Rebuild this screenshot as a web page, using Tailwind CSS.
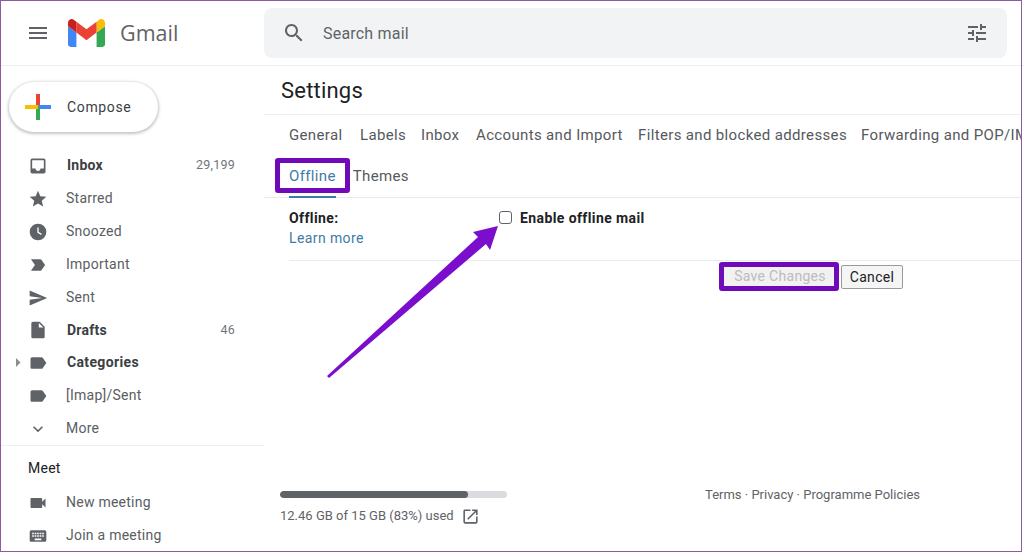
<!DOCTYPE html>
<html lang="en">
<head>
  <meta charset="UTF-8" />
  <meta name="viewport" content="width=device-width, initial-scale=1.0" />
  <title>Gmail - Settings</title>
  <script src="https://cdn.jsdelivr.net/npm/@tailwindcss/browser@4"></script>
</head>
<body class="bg-white font-['Roboto',sans-serif] text-[#3c4043] overflow-hidden">
  <div class="relative w-[1024px] h-[553px] overflow-hidden">

    <!-- header -->
    <header class="h-[66px] flex items-center border-b border-[#eceef0]">
      <div class="w-[264px] flex items-center shrink-0">
        <svg class="ml-[26px] w-[24px] h-[24px] fill-[#5f6368]" viewBox="0 0 24 24"><path d="M3 18h18v-2H3v2zm0-5h18v-2H3v2zm0-7v2h18V6H3z"/></svg>
        <svg class="ml-[18px] w-[37px] h-[28px]" viewBox="52 42 88 66">
          <path fill="#4285f4" d="M58 108h14V74L52 59v43c0 3.32 2.69 6 6 6"/>
          <path fill="#34a853" d="M120 108h14c3.32 0 6-2.69 6-6V59l-20 15"/>
          <path fill="#fbbc04" d="M120 48v26l20-15v-8c0-7.42-8.47-11.65-14.4-7.2"/>
          <path fill="#ea4335" d="M72 74V48l24 18 24-18v26L96 92"/>
          <path fill="#c5221f" d="M52 51v8l20 15V48l-5.6-4.2c-5.94-4.45-14.4-.22-14.4 7.2"/>
        </svg>
        <span class="ml-[15px] text-[21.5px] leading-none text-[#5f6368] font-['Open_Sans',sans-serif]">Gmail</span>
      </div>
      <div class="w-[743px] h-[50px] bg-[#f1f3f4] rounded-lg flex items-center pl-[18px] pr-[18px]">
        <svg class="w-[24px] h-[24px] fill-[#5f6368]" viewBox="0 0 24 24"><path d="M15.5 14h-.79l-.28-.27C15.41 12.59 16 11.11 16 9.5 16 5.91 13.09 3 9.5 3S3 5.91 3 9.5 5.91 16 9.5 16c1.61 0 3.09-.59 4.23-1.57l.27.28v.79l5 4.99L20.49 19l-4.99-5zm-6 0C7.01 14 5 11.99 5 9.5S7.01 5 9.5 5 14 7.01 14 9.5 11.99 14 9.5 14z"/></svg>
        <span class="ml-[17px] mt-[2px] text-[16px] tracking-[0.2px] text-[#5f6368]">Search mail</span>
        <svg class="ml-auto w-[24px] h-[24px] fill-[#5f6368]" viewBox="0 0 24 24"><path d="M3 17v2h6v-2H3zM3 5v2h10V5H3zm10 16v-2h8v-2h-8v-2h-2v6h2zM7 9v2H3v2h4v2h2V9H7zm14 4v-2H11v2h10zm-6-4h2V7h4V5h-4V3h-2v6z"/></svg>
      </div>
    </header>

    <div class="flex w-[1021px] h-[487px]">
      <!-- sidebar -->
      <aside class="w-[264px] shrink-0 text-[14px] tracking-[0.25px]">
        <div class="pt-[16px] pl-[9px]">
          <div class="w-[149px] h-[50px] rounded-full bg-white shadow-[0_1px_3px_1px_rgba(60,64,67,0.3)] flex items-center pl-[16px]">
            <svg class="w-[26px] h-[26px]" viewBox="0 0 26 26">
              <rect x="11" y="0" width="4" height="13" fill="#ea4335"/>
              <rect x="13" y="11" width="13" height="4" fill="#4285f4"/>
              <rect x="11" y="13" width="4" height="13" fill="#34a853"/>
              <rect x="0" y="11" width="13" height="4" fill="#fbbc04"/>
            </svg>
            <span class="ml-[16px] tracking-[0.65px] text-[#3c4043]">Compose</span>
          </div>
        </div>

        <ul class="mt-[17px] border-b border-[#eff0f1] text-[#5a5e62]">
          <li class="h-[33px] flex items-center pl-[28px] pr-[29px] font-bold text-[#3c4043]">
            <svg class="w-[20px] h-[20px] fill-[#5f6368]" viewBox="0 0 24 24"><path d="M19 3H5a2 2 0 0 0-2 2v14c0 1.1.89 2 2 2h14c1.1 0 2-.9 2-2V5c0-1.1-.9-2-2-2zm0 12h-4c0 1.66-1.35 3-3 3s-3-1.34-3-3H4.99V5H19v10z"/></svg>
            <span class="ml-[19px]">Inbox</span>
            <span class="ml-auto text-[12.5px] font-normal text-[#70757a]">29,199</span>
          </li>
          <li class="h-[33px] flex items-center pl-[28px] pr-[29px]">
            <svg class="w-[20px] h-[20px] fill-[#5f6368]" viewBox="0 0 24 24"><path d="M12 17.27L18.18 21l-1.64-7.03L22 9.24l-7.19-.61L12 2 9.19 8.63 2 9.24l5.46 4.73L5.82 21z"/></svg>
            <span class="ml-[18px]">Starred</span>
          </li>
          <li class="h-[33px] flex items-center pl-[28px] pr-[29px]">
            <svg class="w-[20px] h-[20px]" viewBox="0 0 24 24"><circle cx="12" cy="12" r="10" fill="#5f6368"/><path d="M12 6.5V12.3l4.2 2.5" fill="none" stroke="#fff" stroke-width="1.6"/></svg>
            <span class="ml-[18px]">Snoozed</span>
          </li>
          <li class="h-[33px] flex items-center pl-[28px] pr-[29px]">
            <svg class="w-[20px] h-[20px] fill-[#5f6368]" viewBox="0 0 24 24"><path d="M3.5 18.99l11 .01c.67 0 1.27-.33 1.63-.84L20.5 12l-4.37-6.16c-.36-.51-.96-.84-1.63-.84l-11 .01L8.34 12 3.5 18.99z"/></svg>
            <span class="ml-[18px]">Important</span>
          </li>
          <li class="h-[33px] flex items-center pl-[28px] pr-[29px]">
            <svg class="w-[20px] h-[20px] fill-[#5f6368]" viewBox="0 0 24 24"><path d="M2.01 21L23 12 2.01 3 2 10l15 2-15 2z"/></svg>
            <span class="ml-[18px]">Sent</span>
          </li>
          <li class="h-[32px] flex items-center pl-[28px] pr-[29px] font-bold text-[#3c4043]">
            <svg class="w-[20px] h-[20px] fill-[#5f6368]" viewBox="0 0 24 24"><path d="M14 2H6c-1.1 0-1.99.9-1.99 2L4 20c0 1.1.89 2 1.99 2H18c1.1 0 2-.9 2-2V8l-6-6zm-1 7V3.5L18.5 9H13z"/></svg>
            <span class="ml-[19px]">Drafts</span>
            <span class="ml-auto text-[12.5px] font-normal text-[#70757a]">46</span>
          </li>
          <li class="relative h-[33px] flex items-center pl-[28px] pr-[29px] font-bold text-[#3c4043]">
            <svg class="absolute left-[15px] top-[12px] w-[6px] h-[9px] fill-[#8a8d91]" viewBox="0 0 6 9"><path d="M1 0l4.5 4.5L1 9z"/></svg>
            <svg class="w-[20px] h-[20px] fill-[#5f6368]" viewBox="0 0 24 24"><path d="M17.63 5.84C17.27 5.33 16.67 5 16 5L5 5.01C3.9 5.01 3 5.9 3 7v10c0 1.1.9 1.99 2 1.99L16 19c.67 0 1.27-.33 1.63-.84L22 12l-4.37-6.16z"/></svg>
            <span class="ml-[19px] tracking-[0.35px]">Categories</span>
          </li>
          <li class="h-[33px] flex items-center pl-[28px] pr-[29px]">
            <svg class="w-[20px] h-[20px] fill-[#5f6368]" viewBox="0 0 24 24"><path d="M17.63 5.84C17.27 5.33 16.67 5 16 5L5 5.01C3.9 5.01 3 5.9 3 7v10c0 1.1.9 1.99 2 1.99L16 19c.67 0 1.27-.33 1.63-.84L22 12l-4.37-6.16z"/></svg>
            <span class="ml-[18px]">[Imap]/Sent</span>
          </li>
          <li class="h-[33px] flex items-center pl-[28px] pr-[29px]">
            <svg class="w-[20px] h-[20px] fill-[#5f6368]" viewBox="0 0 24 24"><path d="M16.59 8.59L12 13.17 7.41 8.59 6 10l6 6 6-6z"/></svg>
            <span class="ml-[18px]">More</span>
          </li>
        </ul>

        <div class="h-[45px] flex items-center pl-[28px] text-[#202124]">Meet</div>
        <ul class="-mt-[5px] text-[#5a5e62]">
          <li class="h-[33px] flex items-center pl-[28px]">
            <svg class="w-[20px] h-[20px] fill-[#5f6368]" viewBox="0 0 24 24"><path d="M17 10.5V7c0-.55-.45-1-1-1H4c-.55 0-1 .45-1 1v10c0 .55.45 1 1 1h12c.55 0 1-.45 1-1v-3.5l4 4v-11l-4 4z"/></svg>
            <span class="ml-[18px]">New meeting</span>
          </li>
          <li class="h-[33px] flex items-center pl-[28px]">
            <svg class="w-[20px] h-[20px] fill-[#5f6368]" viewBox="0 0 24 24"><path d="M20 5H4c-1.1 0-1.99.9-1.99 2L2 17c0 1.1.9 2 2 2h16c1.1 0 2-.9 2-2V7c0-1.1-.9-2-2-2zm-9 3h2v2h-2V8zm0 3h2v2h-2v-2zM8 8h2v2H8V8zm0 3h2v2H8v-2zm-1 2H5v-2h2v2zm0-3H5V8h2v2zm9 7H8v-2h8v2zm0-4h-2v-2h2v2zm0-3h-2V8h2v2zm3 3h-2v-2h2v2zm0-3h-2V8h2v2z"/></svg>
            <span class="ml-[18px]">Join a meeting</span>
          </li>
        </ul>
      </aside>

      <!-- settings -->
      <main class="flex-1 min-w-0 overflow-hidden">
        <div class="h-[49px] flex items-center pl-[17px] border-b border-[#eceef0] text-[22px] tracking-[0.2px] text-[#202124]">Settings</div>

        <div class="pl-[25px] border-b border-[#e8eaed] h-[83px] text-[15px] tracking-[0.35px] text-[#55595d]">
          <div class="h-[41px] flex items-center gap-[16px] whitespace-nowrap">
            <span class="w-[55px] shrink-0">General</span><span class="w-[45px] shrink-0">Labels</span><span class="w-[39px] shrink-0">Inbox</span><span class="w-[146px] shrink-0">Accounts and Import</span><span class="w-[207px] shrink-0">Filters and blocked addresses</span><span class="shrink-0">Forwarding and POP/IMAP</span>
          </div>
          <div class="h-[42px] flex gap-[17px] whitespace-nowrap">
            <span class="h-[42px] flex items-center border-b-[2px] border-[#3f7ba6] text-[#3f7ba6]">Offline</span>
            <span class="h-[42px] flex items-center pb-[2px]">Themes</span>
          </div>
        </div>

        <div class="ml-[25px] h-[63px] flex border-b border-[#e8eaed] text-[14px] tracking-[0.4px]">
          <div class="w-[210px] pt-[11px]">
            <div class="font-bold text-[#202124] leading-[18px]">Offline:</div>
            <a class="block mt-[2px] leading-[18px] text-[#3f7ba6]">Learn more</a>
          </div>
          <label class="flex items-start pt-[13px]">
            <span class="w-[13px] h-[13px] border border-[#5f6368] rounded-[3px] bg-white"></span>
            <span class="ml-[8px] -mt-[2px] font-bold text-[#202124] leading-[18px]">Enable offline mail</span>
          </label>
        </div>

        <div class="flex pl-[460px] pt-[4px] text-[14px] tracking-[0.3px] gap-[5px]">
          <button class="w-[112px] h-[22px] bg-[#f1f1f1] text-[#bcbcbc] flex items-center justify-center whitespace-nowrap">Save Changes</button>
          <button class="w-[62px] h-[24px] bg-[#f5f5f5] border border-[#9a9a9a] rounded-[2px] text-[#202124] flex items-center justify-center">Cancel</button>
        </div>

        <div class="flex mt-[202px] pl-[16px]">
          <div class="w-[227px]">
            <div class="h-[7px] rounded-full bg-[#dadce0] overflow-hidden">
              <div class="h-full bg-[#5f6368] rounded-full" style="width: 83%"></div>
            </div>
            <div class="flex items-center mt-[8px] text-[13px] text-[#5f6368] h-[20px] whitespace-nowrap">
              <span>12.46 GB of 15 GB (83%) used</span>
              <svg class="ml-[7px] w-[19px] h-[19px] fill-[#5f6368]" viewBox="0 0 24 24"><path d="M19 19H5V5h7V3H5c-1.11 0-2 .9-2 2v14c0 1.1.89 2 2 2h14c1.1 0 2-.9 2-2v-7h-2v7zM14 3v2h3.59l-9.83 9.83 1.41 1.41L19 6.41V10h2V3h-7z"/></svg>
            </div>
          </div>
          <div class="ml-[198px] -mt-[4px] text-[13px] leading-[16px] text-[#5f6368]">Terms · Privacy · Programme Policies</div>
        </div>
      </main>
    </div>

    <!-- annotations drawn over the screenshot -->
    <div class="absolute left-[275px] top-[158px] w-[75px] h-[35px] border-[5px] border-[#7009b8] rounded-[3px]"></div>
    <div class="absolute left-[719px] top-[262px] w-[120px] h-[29px] border-[5px] border-[#7009b8] rounded-[3px]"></div>
    <svg class="absolute left-0 top-0 w-[1024px] h-[553px] pointer-events-none" viewBox="0 0 1024 553">
      <polygon points="327,376 478,237 473,232 498,226 490,250 486,244 329,378" fill="#7a0ecc"/>
    </svg>
    <div class="absolute left-0 top-0 w-[1022px] h-[552px] border border-[#8e5b9f] pointer-events-none"></div>
  </div>
</body>
</html>
